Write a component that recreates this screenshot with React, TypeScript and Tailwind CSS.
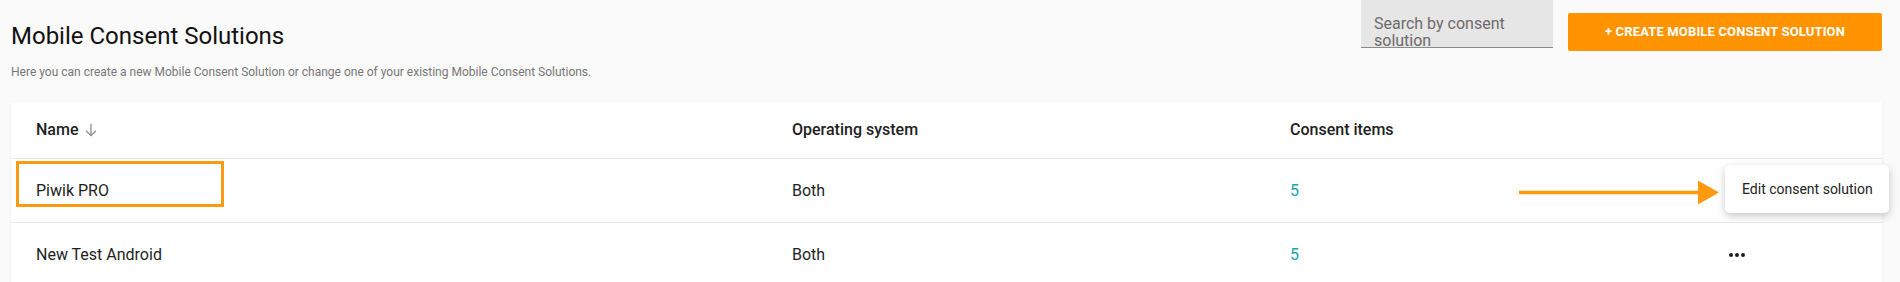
import React from "react";

function SortArrow() {
  return (
    <svg width="18" height="18" viewBox="0 0 24 24" className="ml-[4px]" fill="none">
      <path d="M12 3.5V19.5" stroke="#8f8f8f" strokeWidth="1.8" />
      <path d="M5.5 13L12 19.5L18.5 13" stroke="#8f8f8f" strokeWidth="1.8" />
    </svg>
  );
}

function Dots() {
  return (
    <div className="flex items-center gap-[2px]">
      <span className="block w-[4px] h-[4px] rounded-full bg-[#1d1d1d]" />
      <span className="block w-[4px] h-[4px] rounded-full bg-[#1d1d1d]" />
      <span className="block w-[4px] h-[4px] rounded-full bg-[#1d1d1d]" />
    </div>
  );
}

const rows = [
  { name: "Piwik PRO", os: "Both", items: "5", dots: false },
  { name: "New Test Android", os: "Both", items: "5", dots: true },
];

export default function App() {
  return (
    <div
      className="relative w-full h-[282px] overflow-hidden bg-[#fafafa] pl-[11px] pr-[18px]"
      style={{ fontFamily: "Roboto, 'Noto Sans', Arial, sans-serif" }}
    >
      <div className="flex justify-between">
        <div className="pt-[22px]">
          <h1 className="text-[24px] leading-[28px] text-[#111] font-normal">Mobile Consent Solutions</h1>
          <p className="mt-[14px] text-[12px] leading-[16px] text-[#777]">
            Here you can create a new Mobile Consent Solution or change one of your existing Mobile Consent Solutions.
          </p>
        </div>
        <div className="flex items-start gap-[15px]">
          <div className="w-[192px] h-[48px] overflow-hidden bg-[#e6e6e6] border-b border-[#8a8a8a] pl-[13px] pt-[16px] text-[16px] leading-[16.5px] text-[#6b6b6b]">
            Search by consent solution
          </div>
          <button className="mt-[13px] w-[314px] h-[38px] rounded-[2px] bg-[#ff9400] text-white text-[13px] font-bold uppercase tracking-[0.15px] flex items-center justify-center">
            + Create mobile consent solution
          </button>
        </div>
      </div>

      <div className="mt-[22px] bg-white shadow-[0_1px_3px_rgba(0,0,0,0.07)]">
        <div className="grid grid-cols-[756px_498px_439px_1fr] items-center h-[57px] pl-[25px] border-b border-[#e9e9e9] text-[16px] font-medium text-[#1e1e1e]">
          <div className="flex items-center">
            Name
            <SortArrow />
          </div>
          <div>Operating system</div>
          <div>Consent items</div>
          <div />
        </div>
        {rows.map((r, i) => (
          <div
            key={i}
            className={
              "grid grid-cols-[756px_498px_439px_1fr] items-center h-[64px] pl-[25px] text-[16px] text-[#1e1e1e] " +
              (i === 0 ? "border-b border-[#e9e9e9]" : "")
            }
          >
            <div>{r.name}</div>
            <div>{r.os}</div>
            <div className="text-[#16a5a8]">{r.items}</div>
            <div>{r.dots ? <Dots /> : null}</div>
          </div>
        ))}
      </div>

      {/* dropdown menu */}
      <div className="absolute left-[1725px] top-[165px] w-[164px] h-[48px] bg-white rounded-[5px] shadow-[0_3px_8px_rgba(0,0,0,0.22)] flex items-center pl-[17px] text-[14px] text-[#222]">
        Edit consent solution
      </div>

      {/* annotation rectangle */}
      <div className="absolute left-[16px] top-[161px] w-[208px] h-[46px] border-[3px] border-[#ff9a10]" />

      {/* annotation arrow */}
      <svg className="absolute left-[1515px] top-[178px]" width="206" height="30" viewBox="0 0 206 30">
        <path d="M4 14.5H188" stroke="#ff9a10" strokeWidth="3.5" />
        <path d="M183 2.5L204 14.5L183 26.5Z" fill="#ff9a10" />
      </svg>
    </div>
  );
}
